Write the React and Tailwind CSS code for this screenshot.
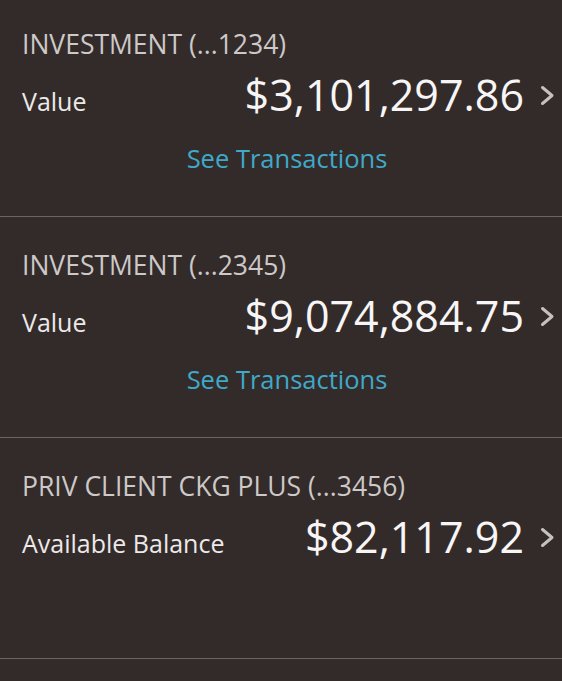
const accounts = [
  { name: "INVESTMENT (...1234)", label: "Value", amount: "$3,101,297.86", link: true },
  { name: "INVESTMENT (...2345)", label: "Value", amount: "$9,074,884.75", link: true },
  { name: "PRIV CLIENT CKG PLUS (...3456)", label: "Available Balance", amount: "$82,117.92", link: false },
];

function Chevron() {
  return (
    <svg width="15" height="21" viewBox="0 0 15 21" fill="none" className="shrink-0">
      <path d="M2.5 2.5 L12 10.5 L2.5 18.5" stroke="#c4c1c0" strokeWidth="3" strokeLinecap="round" strokeLinejoin="round" />
    </svg>
  );
}

function AccountRow({ account }) {
  return (
    <div className="border-b border-[#6a6463] pt-[31px] h-[221px]">
      <div className="pl-[22px] text-[26.5px] leading-[34px] text-[#cdc9c8]">{account.name}</div>
      <div className="flex items-baseline justify-between pl-[22px] pr-[7px] mt-[6px]">
        <span className="text-[25px] leading-[34px] text-[#ece9e8]">{account.label}</span>
        <div className="flex items-center gap-[16px]">
          <span className="text-[43px] leading-[56px] text-[#f7f5f5]">{account.amount}</span>
          <Chevron />
        </div>
      </div>
      {account.link && (
        <div className="text-center text-[25.5px] leading-[34px] text-[#3fa9c9] mt-[18px] pl-[12px]">
          See Transactions
        </div>
      )}
    </div>
  );
}

export default function App() {
  return (
    <div className="bg-[#332b2a] font-['Open_Sans',sans-serif] w-[562px] h-[681px] overflow-hidden">
      <div className="-mt-[4px]">
        {accounts.map((a) => (
          <AccountRow key={a.name} account={a} />
        ))}
      </div>
    </div>
  );
}
